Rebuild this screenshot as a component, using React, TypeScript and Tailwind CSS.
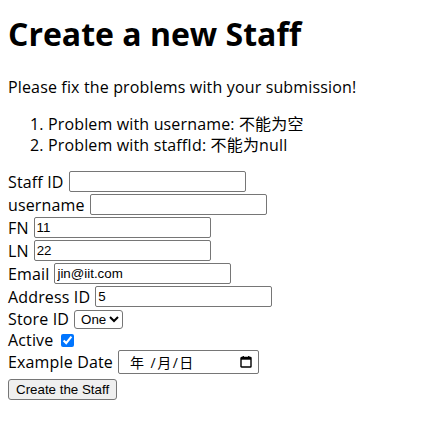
import React from "react";

const FONT = "font-['Open_Sans','Noto_Sans_CJK_SC',sans-serif]";
const CTRL = "font-['Liberation_Sans',Arial,sans-serif] text-[13.33px]";

interface FieldRowProps {
  label: string;
  value?: string;
}

function FieldRow({ label, value }: FieldRowProps) {
  return (
    <div className="flex h-[23px] items-center">
      <span>{label}</span>
      <input
        type="text"
        defaultValue={value}
        className={`ml-[5px] h-[21px] w-[177px] rounded-[2px] border border-[#767676] bg-white px-[2px] tracking-normal text-black outline-none ${CTRL}`}
      />
    </div>
  );
}

function CalendarIcon() {
  return (
    <svg width="12" height="12" viewBox="0 0 12 12" className="block">
      <rect x="1" y="1.5" width="10" height="9.5" fill="none" stroke="#000" strokeWidth="1.4" rx="0.6" />
      <rect x="1" y="1.5" width="10" height="2.2" fill="#000" />
      <rect x="2.6" y="0" width="1.3" height="2" fill="#000" />
      <rect x="8.1" y="0" width="1.3" height="2" fill="#000" />
    </svg>
  );
}

export default function App() {
  return (
    <div className={`min-h-[442px] bg-white px-2 text-[16px] tracking-[0.15px] text-black ${FONT}`}>
      <h1 className="pt-[12px] text-[32px] font-bold leading-[44px] tracking-normal">Create a new Staff</h1>
      <p className="mt-[20px] leading-[22px]">Please fix the problems with your submission!</p>
      <ol className="mt-[16px] list-decimal pl-[40px] leading-[21px]">
        <li>Problem with username: 不能为空</li>
        <li>Problem with staffId: 不能为null</li>
      </ol>
      <form className="mt-[14px]">
        <FieldRow label="Staff ID" />
        <FieldRow label="username" />
        <FieldRow label="FN" value="11" />
        <FieldRow label="LN" value="22" />
        <FieldRow label="Email" value="jin@iit.com" />
        <FieldRow label="Address ID" value="5" />
        <div className="flex h-[22px] items-center">
          <span>Store ID</span>
          <select
            defaultValue="One"
            className={`ml-[5px] h-[19px] w-[49px] rounded-[3px] border border-[#767676] bg-white pl-[2px] tracking-normal text-black ${CTRL}`}
          >
            <option>One</option>
            <option>Two</option>
          </select>
        </div>
        <div className="flex h-[20px] items-center">
          <span>Active</span>
          <input type="checkbox" defaultChecked className="ml-[8px] h-[13px] w-[13px] accent-[#0075ff]" />
        </div>
        <div className="flex h-[24px] items-center">
          <span>Example Date</span>
          <div
            className={`ml-[5px] flex h-[24px] w-[141px] items-center justify-between rounded-[2px] border border-[#767676] bg-white pl-[11px] pr-[6px] ${FONT} text-[14px]`}
          >
            <span className="tracking-[1.5px]">年 /月/日</span>
            <CalendarIcon />
          </div>
        </div>
        <div className="mt-[2px]">
          <button
            type="button"
            className={`h-[21px] rounded-[3px] border border-[#767676] bg-[#efefef] px-[7px] tracking-normal text-black ${CTRL}`}
          >
            Create the Staff
          </button>
        </div>
      </form>
    </div>
  );
}
